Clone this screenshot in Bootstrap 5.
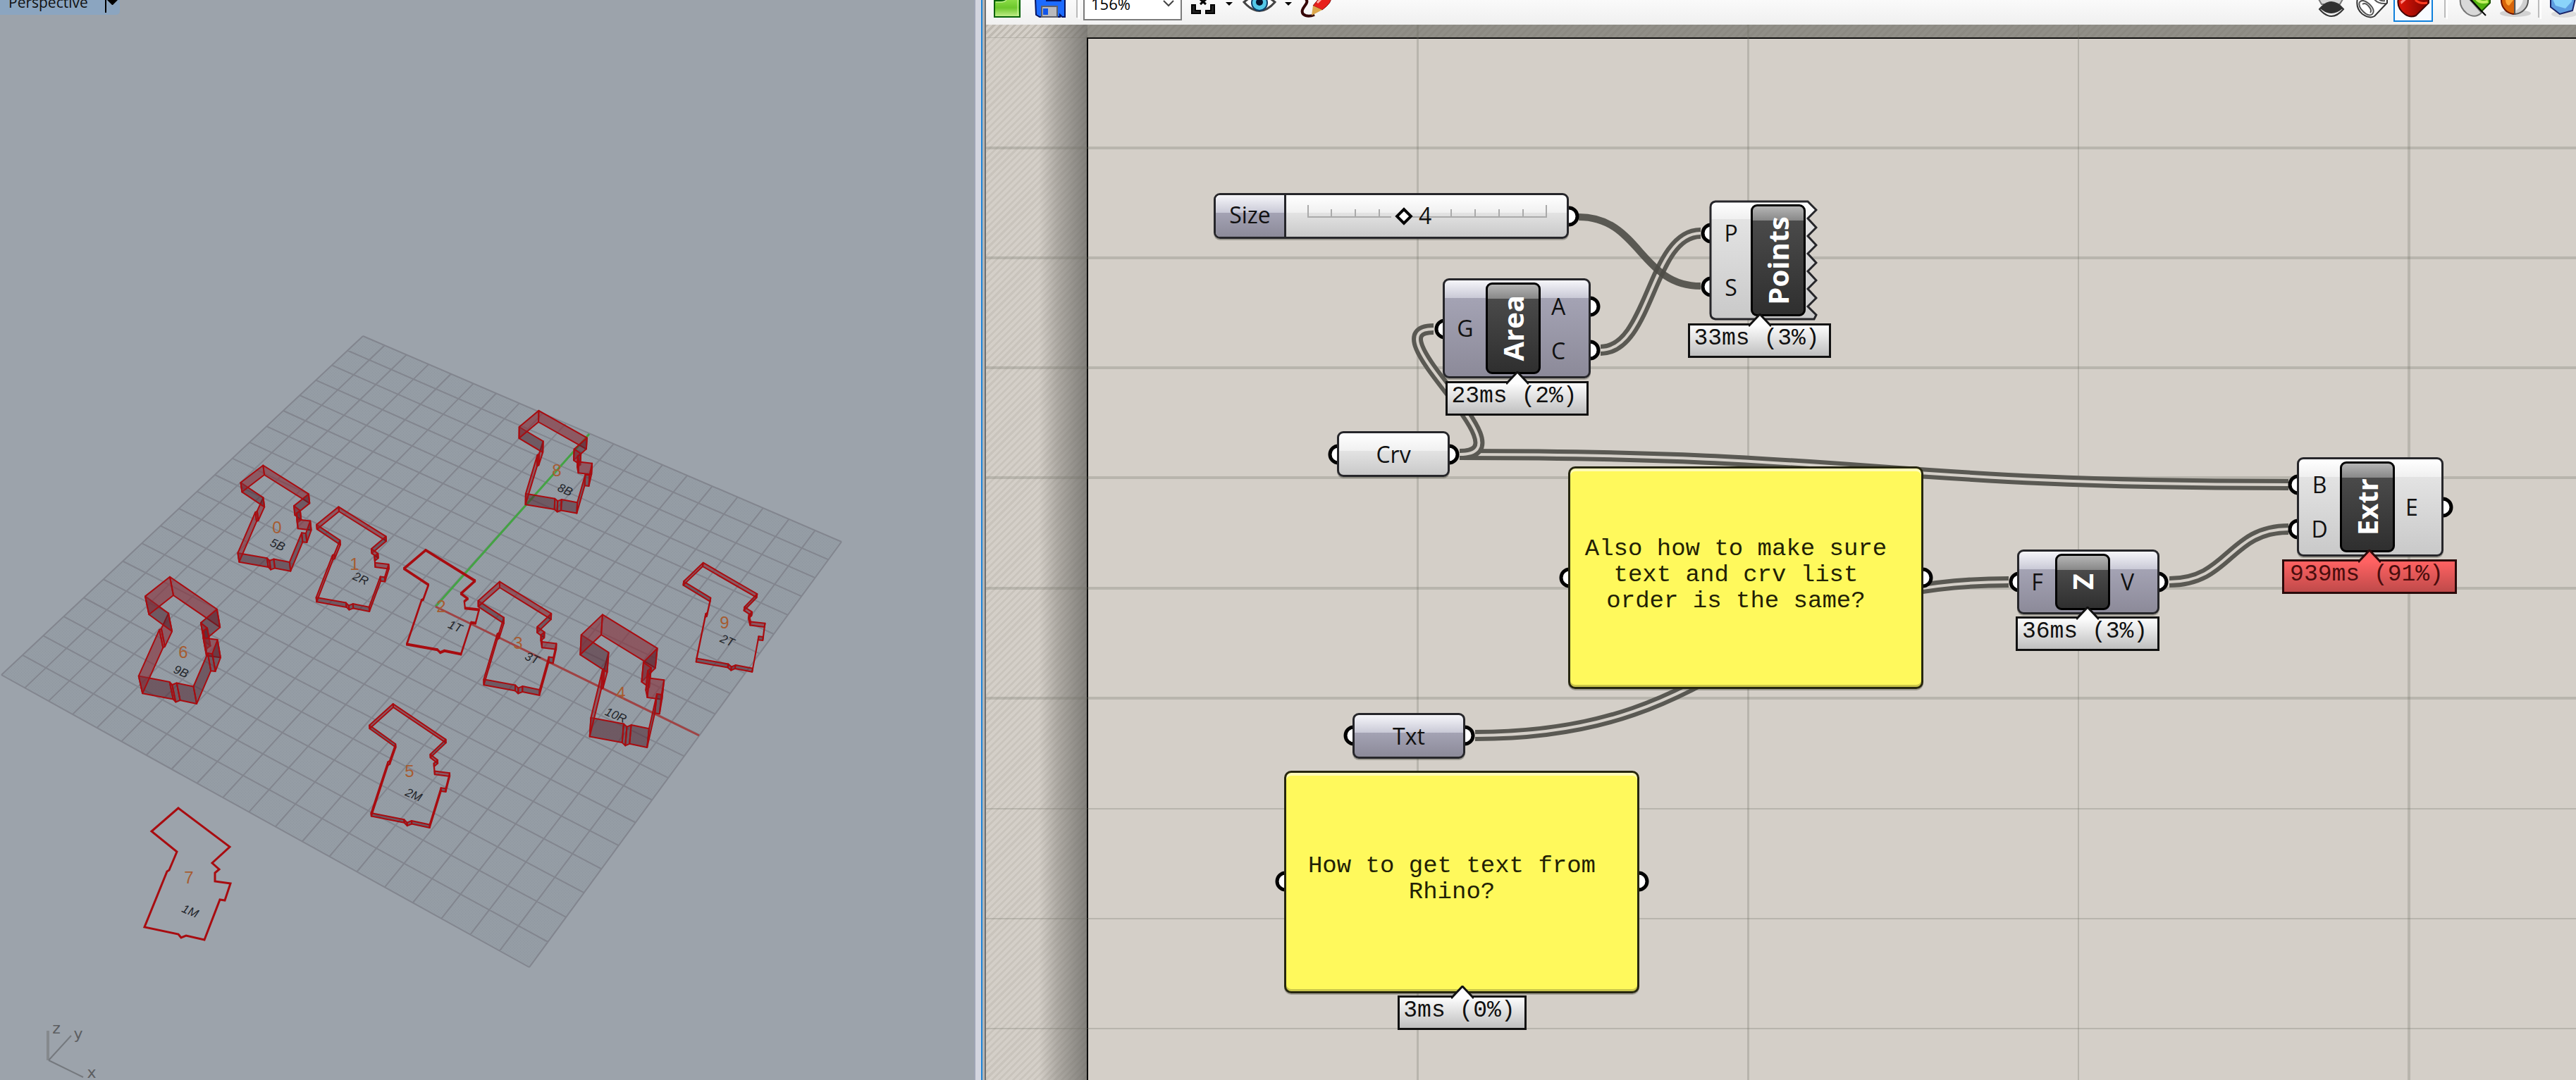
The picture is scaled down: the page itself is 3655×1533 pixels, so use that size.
<!DOCTYPE html>
<html lang="en">
<head>
<meta charset="utf-8">
<meta name="viewport" content="width=device-width, initial-scale=1">
<title>Perspective viewport and definition canvas</title>
<link href="https://cdn.jsdelivr.net/npm/bootstrap@5.3.0/dist/css/bootstrap.min.css" rel="stylesheet">
<style>
body{font-family:"Open Sans","Noto Sans",sans-serif;color:#111;background:#9ca3ab}
.view-pane{flex:1382 1 0;min-width:0;background:#9ca3ab}
.gh-pane{flex:2256 1 0;min-width:0}
.splitter{flex:none;width:17px;background:linear-gradient(90deg,#9fa5b5 0 2px,#d3d5df 2px 10px,#1b84d8 10px 12px,#b5b5b5 12px 15px,#707070 15px)}
.view-tab{height:21px;width:170px;background:#8ba5c0;border-radius:0 0 5px 0;overflow:hidden}
.view-title{font-size:21px;line-height:30px;margin-top:-12px;padding-left:12px;width:149px}
.view-menu{width:20px;border-left:2px solid #000 !important;height:18px}
.scene{width:1382px;height:1533px}
.scene-num{font:24px "Liberation Sans",sans-serif;fill:#a65c31;text-anchor:middle}
.scene-tag{font:italic 17px "Liberation Sans",sans-serif;fill:#23262b;text-anchor:middle}
.axis-tag{font:22px "DejaVu Sans",sans-serif;fill:#5c5e61;text-anchor:middle}
.gh-toolbar{height:35px;background:linear-gradient(#fafafa,#f0f0f0);overflow:hidden}
.gh-toolbar svg{display:block}
.tool{height:35px;border:0;padding:0;background:none}
.zoom-box{appearance:none;width:140px;height:48px;margin:-19px 10px 0 0;padding:0 24px 0 9px;border:2px solid #7a7a7a;border-radius:0;background:#fff url("data:image/svg+xml,%3Csvg xmlns='http://www.w3.org/2000/svg' viewBox='0 0 16 10'%3E%3Cpath d='M1 1l7 7 7-7' fill='none' stroke='%23444' stroke-width='2'/%3E%3C/svg%3E") no-repeat right 9px center/16px 10px;font-size:22px;line-height:30px;color:#000}
.gh-canvas{background:#d4cfc8;overflow:hidden}
.hatch{background:repeating-linear-gradient(135deg,rgba(90,84,70,.09) 0 3px,transparent 3px 7px)}
.hatch-top{top:0;left:0;right:0;height:18px}
.hatch-left{top:0;left:0;bottom:0;width:144px}
.shade-left{top:0;left:0;bottom:0;width:144px;background:linear-gradient(90deg,transparent 0 52%,rgba(105,103,98,.35) 70%,rgba(100,99,95,.75))}
.shade-top{top:0;left:144px;right:0;height:18px;background:#918f88}
.page-edge{top:18px;left:143px;right:-4px;bottom:-4px;border:2px solid #000}
.wires{left:0;top:0;width:2256px;height:1498px}
.gh-node{border:3px solid #26262a;border-radius:9px;background:linear-gradient(#fff 0,#f0f0f0 25px,#e3e3e3 25px,#c9c9c9);box-shadow:0 2px 0 rgba(60,60,50,.35);font-size:32px;line-height:36px}
.gh-hidden{background:linear-gradient(#f6f6fa 0,#c9c9d6 25px,#a4a3b4 25px,#8c8a99)}
.io{text-align:center;font-size:32px;line-height:36px}
.io-in{flex:0 0 58px}
.io-out{flex:1 1 0;padding-right:18px}
.io-pair{display:flex;flex-direction:column;gap:27px}
.n-unit .io-in{flex-basis:51px}
.n-points .io-in{flex-basis:56px}
.n-points .io-pair{gap:41px}
.gh-core{width:78px;align-self:stretch;margin:3px 0;border:3px solid #000;border-radius:9px;background:linear-gradient(#b5b5b5 0,#888 20px,#4a4a4a 20px,#2f2f2f);color:#fff;font-weight:700;font-size:40px;line-height:44px}
.gh-core span{writing-mode:vertical-rl;transform:rotate(180deg)}
.n-size{left:323px;top:239px;width:504px;height:65px}
.n-size label{width:100px;height:100%;line-height:56px;text-align:center;border-right:3px solid #26262a;border-radius:6px 0 0 6px}
.slide-area{flex:1}
.slide-area svg{left:27px;top:0}
.slide-area input{position:absolute;left:22px;top:0;width:359px;height:60px;appearance:none;background:none;margin:0}
.slide-area input::-webkit-slider-thumb{appearance:none;width:18px;height:18px;border:4px solid #000;background:#fff;transform:rotate(45deg)}
.slide-area output{left:188px;top:11px}
.n-area{left:648px;top:360px;width:210px;height:142px}
.n-crv{left:498px;top:577px;width:160px;height:65px}
.n-points{left:1026px;top:249px;width:154px;height:171px}
.n-points-body{padding:3px}
.n-txt{left:520px;top:977px;width:160px;height:65px}
.n-unit{left:1463px;top:745px;width:202px;height:92px}
.n-extr{left:1860px;top:614px;width:208px;height:141px}
.gh-note{border:3px solid #26260f;border-radius:10px;background:#fff95c;box-shadow:inset 0 4px 0 #fffcb8,inset 0 -3px 0 #c9c54a,0 2px 0 rgba(60,60,50,.35);font-family:"Liberation Mono",monospace;font-size:34px;line-height:37px;color:#222105;padding:0 28px 8px 0}
.note-a{left:826px;top:627px;width:504px;height:316px}
.note-b{left:423px;top:1059px;width:504px;height:316px}
.gh-timer{height:49px;border:3px solid #111;background:linear-gradient(#fdfdfd,#bfbfbf);font-family:"Liberation Mono",monospace;font-size:33px;line-height:37px;padding-right:8px;text-align:center;color:#111;white-space:nowrap}
.gh-timer svg{position:absolute;top:-17px;left:50%;margin-left:-16px}
.t-points{left:996px;top:424px;width:203px}
.t-area{left:652px;top:506px;width:203px}
.t-unit{left:1461px;top:840px;width:204px}
.t-note{left:584px;top:1378px;width:183px}
.t-extr{left:1839px;top:759px;width:248px;background:linear-gradient(#ff6262,#bf4a4a);color:#4a0d0d;border-color:#2a0a0a}
</style>
<script src="https://cdn.jsdelivr.net/npm/bootstrap@5.3.0/dist/js/bootstrap.bundle.min.js"></script>
</head>
<body class="m-0">
<main class="d-flex vh-100 overflow-hidden">
  <section class="view-pane position-relative overflow-hidden" aria-label="Perspective viewport">
    <svg class="scene position-absolute top-0 start-0" viewBox="0 0 1382 1533" id="scene" aria-hidden="true"></svg>
    <div class="view-tab d-flex position-relative">
      <div class="view-title">Perspective</div>
      <button class="view-menu btn p-0 border-0 rounded-0 d-flex" type="button" aria-label="Viewport menu"><svg width="18" height="8"><path d="M1 0H16L9 7H8Z"/></svg></button>
    </div>
  </section>
  <div class="splitter"></div>
  <section class="gh-pane d-flex flex-column">
    <div class="gh-toolbar d-flex flex-shrink-0">
      <button class="tool" type="button" aria-label="Open"><svg width="59" height="35" viewBox="1399 0 59 35"><defs><linearGradient id="gf" x2="0" y2="1"><stop stop-color="#8fe04a"/><stop offset=".5" stop-color="#6cc72c"/><stop offset="1" stop-color="#c5f08c"/></linearGradient></defs><path d="M1411-2V24H1447V-2Z" fill="url(#gf)" stroke="#07620a" stroke-width="2"/><path d="M1412 1H1420Q1426 1 1428-3" fill="none" stroke="#07620a" stroke-width="2"/><path d="M1413 3H1422Q1427 3 1429-1M1444 0V22" fill="none" stroke="#d8f7b0" stroke-width="1"/></svg></button>
      <button class="tool" type="button" aria-label="Save"><svg width="79" height="35" viewBox="1458 0 79 35"><path d="M1469-2H1511V24H1507L1504 21V24H1475L1470 21Z" fill="#1d6bff" stroke="#04135e" stroke-width="2"/><path d="M1485-2H1505V1H1485Z" fill="#fff" stroke="#04135e" stroke-width="2"/><path d="M1478 9H1500V24H1478Z" fill="#b9b9bd" stroke="#5c5f6b" stroke-width="2"/><path d="M1480 12H1487V21H1480Z" fill="#1155e8"/><path d="M1528 0V25" stroke="#bcbcbc" stroke-width="2"/><path d="M1531 0V27" stroke="#fff" stroke-width="2"/></svg></button>
      <select class="zoom-box flex-shrink-0" aria-label="Zoom"><option>156%</option></select>
      <button class="tool" type="button" aria-label="Zoom extents"><svg width="74" height="35" viewBox="1688 0 74 35"><path d="M1692 7V19H1704V15H1697V7ZM1724 7V19H1712V15H1719V7Z" fill="#222" stroke="#000" stroke-width="2"/><path d="M1704-1L1712 6M1712-1L1704 6" stroke="#000" stroke-width="3"/><path d="M1740 3H1750L1745 8Z"/></svg></button>
      <button class="tool" type="button" aria-label="Preview"><svg width="80" height="35" viewBox="1762 0 80 35"><path d="M1766 3Q1788-16 1810 3Q1788 28 1766 3Z" fill="#fff" stroke="#444" stroke-width="3"/><circle cx="1788" cy="4" r="11" fill="#55c9e8" stroke="#10416b" stroke-width="2"/><circle cx="1788" cy="3" r="5" fill="#06142e"/><path d="M1824 3H1834L1829 8Z"/></svg></button>
      <button class="tool" type="button" aria-label="Sketch"><svg width="58" height="35" viewBox="1842 0 58 35"><path d="M1854-1C1860 5 1844 12 1850 20Q1856 25 1866 21" fill="none" stroke="#350607" stroke-width="4"/><path d="M1864 8L1874-4H1889Q1892 3 1877 14Z" fill="#e8201c" stroke="#851010"/><path d="M1864 8L1877 14L1862 22Z" fill="#dca64a"/><path d="M1870 4L1877-3" stroke="#ffb0a8" stroke-width="3"/></svg></button>
      <div class="ms-auto d-flex">
      <button class="tool" type="button" aria-label="No preview"><svg width="57" height="35" viewBox="3280 0 57 35"><path d="M3290-1L3294 6H3320L3324-1Z" fill="#d5d5d5" stroke="#777" stroke-width="2"/><path d="M3291 13Q3308-7 3325 13Q3308 33 3291 13Z" fill="#eee" stroke="#333" stroke-width="2"/><path d="M3292 12Q3308-5 3324 12Q3308 26 3292 12Z" fill="#303030"/></svg></button>
      <button class="tool" type="button" aria-label="Wireframe preview"><svg width="55" height="35" viewBox="3337 0 55 35"><path d="M3345-2Q3342 12 3352 20Q3362 27 3369 23L3387 4V-2Z" fill="#fff" stroke="#333" stroke-width="2"/><path d="M3348 3Q3352-2 3361 5Q3371 14 3366 20Q3360 25 3350 13Q3346 7 3348 3ZM3352 6Q3356 3 3361 9Q3366 15 3363 18M3368-2Q3374 6 3385 5M3374-2Q3378 2 3384 1" fill="none" stroke="#555" stroke-width="2"/></svg></button>
      <button class="tool" type="button" aria-label="Shaded preview" aria-pressed="true"><svg width="66" height="35" viewBox="3392 0 66 35"><path d="M3397-2V30H3451V-2" fill="#f8fbff" stroke="#0f80dc" stroke-width="2"/><defs><linearGradient id="gr"><stop stop-color="#e01608"/><stop offset="1" stop-color="#7a0400"/></linearGradient></defs><path d="M3403-2Q3400 11 3412 20Q3420 26 3428 22L3446 4V-2Z" fill="url(#gr)" stroke="#420000" stroke-width="2"/><path d="M3406 2L3412-2H3416L3407 6Z" fill="#ff8c82"/><path d="M3427 0Q3433 6 3444 4" fill="none" stroke="#ff3c22" stroke-width="3"/></svg></button>
      <button class="tool" type="button" aria-label="Selected only"><svg width="80" height="35" viewBox="3458 0 80 35"><path d="M3469 0V25" stroke="#bcbcbc" stroke-width="2"/><path d="M3472 0V27" stroke="#fff" stroke-width="2"/><path d="M3491-2Q3489 10 3500 19Q3512 27 3521 18L3503-2Z" fill="#d8d8d8" stroke="#777" stroke-width="2"/><path d="M3504-3H3533V4L3521 16Z" fill="#53b312" stroke="#1d5205" stroke-width="2"/><path d="M3514-1Q3520 5 3530 2" fill="none" stroke="#c1f060" stroke-width="4"/><path d="M3504-2L3527 22" stroke="#000" stroke-width="2"/></svg></button>
      <button class="tool" type="button" aria-label="Document preview"><svg width="72" height="35" viewBox="3538 0 72 35"><ellipse cx="3569" cy="19" rx="22" ry="5" fill="#d2d2d2"/><path d="M3549-1A19 20 0 0 0 3568 20V-1Z" fill="#d8650a" stroke="#6b1400" stroke-width="2"/><path d="M3568-1V20A20 20 0 0 0 3587-1Z" fill="#cfcfcf" stroke="#555" stroke-width="2"/><path d="M3555-1Q3555 7 3560 8L3567-1Z" fill="#ffa83a"/><path d="M3570-1V15Q3579 8 3580-1Z" fill="#f4f4f4"/><path d="M3602 0V25" stroke="#bcbcbc" stroke-width="2"/><path d="M3605 0V27" stroke="#fff" stroke-width="2"/></svg></button>
      <button class="tool" type="button" aria-label="Mesh quality"><svg width="45" height="35" viewBox="3610 0 45 35"><ellipse cx="3638" cy="20" rx="18" ry="5" fill="#dcdcdc"/><path d="M3619-2V10L3632 20L3650 15L3654-2Z" fill="#5d9de0" stroke="#1a2468" stroke-width="2"/><path d="M3622-1L3626 8L3640 12L3649 2V-1Z" fill="#8ad4fa"/></svg></button>
      </div>
    </div>
    <div class="gh-canvas position-relative flex-grow-1">
      <div class="hatch hatch-left position-absolute"></div>
      <div class="shade-left position-absolute"></div>
      <div class="shade-top position-absolute"></div>
      <div class="hatch hatch-top position-absolute"></div>
      <div class="page-edge position-absolute"></div>
      <svg class="wires position-absolute" viewBox="1399 35 2256 1498" id="wires" aria-hidden="true"></svg>

      <div class="gh-node n-size position-absolute d-flex">
        <label class="gh-hidden" for="size">Size</label>
        <div class="slide-area position-relative">
          <svg class="position-absolute" width="350" height="58"><path d="M4 14V31H122M152 31H342V14M37 20V31M71 20V31M105 20V31M207 20V31M241 20V31M275 20V31M309 20V31" fill="none" stroke="#aaa" stroke-width="2"/></svg>
          <input type="range" id="size" min="0" max="10" value="4">
          <output class="position-absolute" for="size">4</output>
        </div>
      </div>
      <div class="gh-node gh-hidden n-area position-absolute d-flex align-items-center">
        <div class="io io-in">G</div><div class="gh-core d-flex align-items-center justify-content-center"><span>Area</span></div><div class="io io-out io-pair"><span>A</span><span>C</span></div>
      </div>
      <svg class="n-points position-absolute" viewBox="0 0 154 171" aria-hidden="true"><defs><linearGradient id="gw" x2="0" y2="1"><stop stop-color="#fff"/><stop offset=".15" stop-color="#f0f0f0"/><stop offset=".15" stop-color="#e3e3e3"/><stop offset="1" stop-color="#c9c9c9"/></linearGradient></defs><path d="M9 2H140L152 14L140 26L152 39L140 51L152 64L140 76L152 89L140 101L152 114L140 126L152 139L140 151L152 163L149 169H9Q2 168 2 161V10Q2 3 9 2Z" fill="url(#gw)" stroke="#26262a" stroke-width="3"/></svg>
      <div class="n-points n-points-body position-absolute d-flex align-items-center">
        <div class="io io-in io-pair"><span>P</span><span>S</span></div><div class="gh-core d-flex align-items-center justify-content-center"><span>Points</span></div>
      </div>
      <div class="gh-node n-crv position-absolute d-flex align-items-center justify-content-center">Crv</div>
      <div class="gh-note note-a position-absolute d-flex align-items-center justify-content-center text-center"><div>Also how to make sure<br>text and crv list<br>order is the same?</div></div>
      <div class="gh-node gh-hidden n-txt position-absolute d-flex align-items-center justify-content-center">Txt</div>
      <div class="gh-note note-b position-absolute d-flex align-items-center justify-content-center text-center"><div>How to get text from<br>Rhino?</div></div>
      <div class="gh-node gh-hidden n-unit position-absolute d-flex align-items-center">
        <div class="io io-in">F</div><div class="gh-core d-flex align-items-center justify-content-center"><span>Z</span></div><div class="io io-out">V</div>
      </div>
      <div class="gh-node n-extr position-absolute d-flex align-items-center">
        <div class="io io-in io-pair"><span>B</span><span>D</span></div><div class="gh-core d-flex align-items-center justify-content-center"><span>Extr</span></div><div class="io io-out">E</div>
      </div>
      <div class="gh-timer t-points position-absolute"><svg width="32" height="20"><path d="M0 18L16 1L32 18" fill="#fdfdfd" stroke="#111" stroke-width="3"/></svg>33ms (3%)</div>
      <div class="gh-timer t-area position-absolute"><svg width="32" height="20"><path d="M0 18L16 1L32 18" fill="#fdfdfd" stroke="#111" stroke-width="3"/></svg>23ms (2%)</div>
      <div class="gh-timer t-unit position-absolute"><svg width="32" height="20"><path d="M0 18L16 1L32 18" fill="#fdfdfd" stroke="#111" stroke-width="3"/></svg>36ms (3%)</div>
      <div class="gh-timer t-note position-absolute"><svg width="32" height="20"><path d="M0 18L16 1L32 18" fill="#fdfdfd" stroke="#111" stroke-width="3"/></svg>3ms (0%)</div>
      <div class="gh-timer t-extr position-absolute"><svg width="32" height="20"><path d="M0 18L16 1L32 18" fill="#ff6262" stroke="#2a0a0a" stroke-width="3"/></svg>939ms (91%)</div>
    </div>
  </section>
</main>
<script>
// Construction plane: unit square projected onto the four visible corners
const T=[515,477],R=[1194,769],B=[751,1373],L=[2,958];
const sx=T[0]-R[0]+B[0]-L[0],sy=T[1]-R[1]+B[1]-L[1];
const dx1=R[0]-B[0],dx2=L[0]-B[0],dy1=R[1]-B[1],dy2=L[1]-B[1],D=dx1*dy2-dx2*dy1;
const g=(sx*dy2-dx2*sy)/D,h=(dx1*sy-sx*dy1)/D;
const a=R[0]-T[0]+g*R[0],b=L[0]-T[0]+h*L[0],c=T[0],d=R[1]-T[1]+g*R[1],e=L[1]-T[1]+h*L[1],f=T[1];
const proj=(u,v)=>{const w=g*u+h*v+1;return[(a*u+b*v+c)/w,(d*u+e*v+f)/w]};
const unproj=(x,y)=>{const A=a-g*x,Bb=b-h*x,C=x-c,E=d-g*y,F=e-h*y,G=y-f,q=A*F-Bb*E;return[(C*F-Bb*G)/q,(A*G-C*E)/q]};
const P=p=>p.map(n=>n.toFixed(1)).join(' ');
let s=`<defs><pattern id="dots" width="4" height="4" patternUnits="userSpaceOnUse"><path d="M0 0h1v1h-1zM2 2h1v1h-1z" fill="#8a929b"/></pattern></defs>`;
const quad=`M${P(T)}L${P(R)}L${P(B)}L${P(L)}Z`;
s+=`<path d="${quad}" fill="#959da5"/><path d="${quad}" fill="url(#dots)" opacity=".6"/>`;
let lines='';
for(let i=0;i<=20;i++){const t=i/20;lines+=`M${P(proj(t,0))}L${P(proj(t,1))}M${P(proj(0,t))}L${P(proj(1,t))}`}
s+=`<path d="${lines}" fill="none" stroke="#82858e" stroke-width="2"/>`;
const outline=[[253,1147],[326,1202],[301,1225],[311,1234],[305,1239],[305,1251],[327,1254],[319,1278],[312,1277],[290,1334],[264,1328],[257,1331],[253,1326],[205,1316],[237,1237],[240,1235],[251,1209],[215,1180]].map(p=>unproj(...p));
const walls=[[375,674,12],[481,726,6],[604,782,2],[709,834,8],[853,901,28],[558,1004,5],[246,845,25],[253,1147,0],[764,599,14],[997,804,5]];
s+=`<path d="M618 861L836 616" stroke="#44a344" stroke-width="3"/><path d="M618 861L992 1044" stroke="#a04344" stroke-width="3"/>`;
for(const[x,y,ht]of walls){
  const o=unproj(x,y),du=o[0]-outline[0][0],dv=o[1]-outline[0][1];
  const base=outline.map(p=>proj(p[0]+du,p[1]+dv));
  const k=ht/2250,top=base.map(p=>[p[0]+(p[0]-700)*k,p[1]+(p[1]-3200)*k]);
  if(ht)for(let i=0;i<base.length;i++){
    const j=(i+1)%base.length,back=base[j][0]>base[i][0];
    s+=`<path d="M${P(base[i])}L${P(base[j])}L${P(top[j])}L${P(top[i])}Z" fill="${back?'rgba(135,45,55,.6)':'rgba(80,35,45,.55)'}" stroke="#a80c10" stroke-width="2" stroke-linejoin="round"/>`}
  else s+=`<path d="M${base.map(P).join('L')}Z" fill="none" stroke="#a80c10" stroke-width="3"/>`;
}
const nums=[[393,757,0],[503,809,1],[626,869,2],[735,921,3],[881,992,4],[581,1103,5],[260,934,6],[268,1254,7],[790,676,8],[1028,892,9]];
for(const[x,y,n]of nums)s+=`<text class="scene-num" x="${x}" y="${y}">${n}</text>`;
const tags=[[394,773,'5B'],[512,821,'2R'],[646,889,'1T'],[755,934,'3T'],[874,1015,'10R'],[587,1128,'2M'],[257,953,'9B'],[270,1293,'1M'],[802,695,'8B'],[1032,909,'2T']];
for(const[x,y,t]of tags)s+=`<text class="scene-tag" x="${x}" y="${y+6}" transform="rotate(24 ${x} ${y})">${t}</text>`;
s+=`<g stroke="#75797e" stroke-width="3"><path d="M68 1463V1505" stroke="#85898d" stroke-width="4"/><path d="M69 1505L101 1470M69 1505L118 1529" stroke-width="2"/></g>`;
s+=`<text class="axis-tag" x="80" y="1467">z</text><text class="axis-tag" x="111" y="1475">y</text><text class="axis-tag" x="130" y="1530">x</text>`;
document.getElementById('scene').innerHTML=s;

// Canvas grid, wires and grips
let w='<g fill="#6f6f62" fill-opacity=".27">';
[[2010,3],[2479,3],[2948,2],[3416,4]].forEach(q=>w+=`<rect x="${q[0]}" y="35" width="${q[1]}" height="1500"/>`);
[[53,1],[208,4],[364,4],[520,4],[676,4],[833,4],[989,4],[1147,2],[1303,2],[1459,2]].forEach(q=>w+=`<rect x="1399" y="${q[0]}" width="2256" height="${q[1]}"/>`);
w+='</g><g fill="none">';
['M2071 645C2659 645 2659 688 3247 688','M2071 645C2176 645 1939 467 2034 467','M2271 497C2342 497 2342 331 2413 331','M2093 1044C2471 1044 2471 826 2850 826','M3078 826C3163 826 3163 751 3247 751'].forEach(p=>w+=`<path d="${p}" stroke="#5a5953" stroke-width="16"/><path d="${p}" stroke="#d4cfc8" stroke-width="4"/>`);
w+='<path d="M2240 308C2327 308 2327 406 2413 406" stroke="#4c4b46" stroke-opacity=".9" stroke-width="10"/></g><g fill="#fff" stroke="#000" stroke-width="5">';
[[2226,307],[2050,467],[2256,435],[2256,497],[2428,331],[2428,407],[1899,645],[2056,645],[2227,820],[2728,820],[1921,1044],[2078,1044],[1824,1251],[2325,1251],[2865,826],[3062,826],[3261,688],[3261,751],[3466,720]].forEach(q=>w+=`<circle cx="${q[0]}" cy="${q[1]}" r="12"/>`);
document.getElementById('wires').innerHTML=w+'</g>';
</script>
</body>
</html>
